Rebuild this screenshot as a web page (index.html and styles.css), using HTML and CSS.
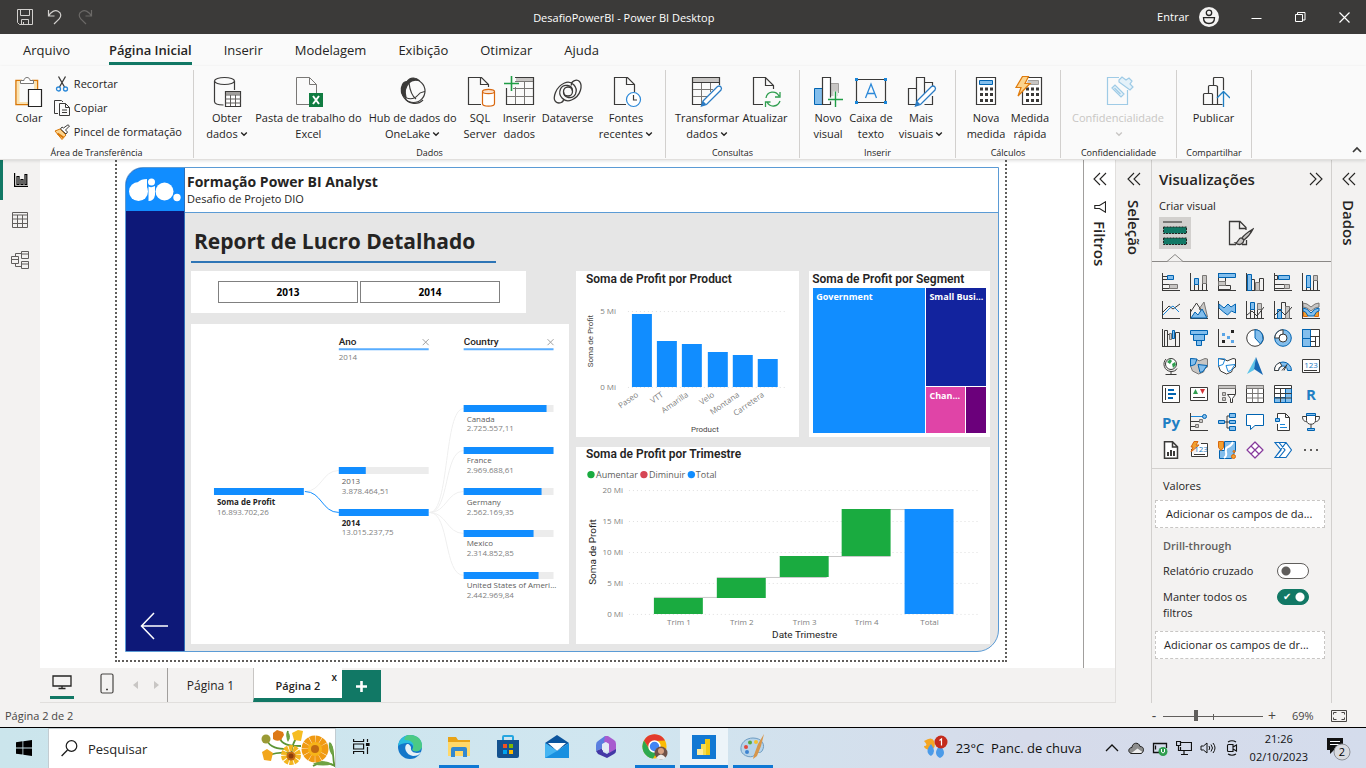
FILE: index.html
```html
<!DOCTYPE html>
<html lang="pt-BR">
<head>
<meta charset="utf-8">
<title>DesafioPowerBI - Power BI Desktop</title>
<link rel="stylesheet" href="styles.css">
</head>
<body>
<svg class="defs" aria-hidden="true">
  <symbol id="caret" viewBox="0 0 8 8"><path d="M1.2 2.5 4 5.3 6.800 2.500" fill="none" stroke="currentColor" stroke-width="1.4"/></symbol>
  <symbol id="left2" viewBox="0 0 14 14"><path d="M7 1 1 7l6 6M13 1 7 7l6 6" fill="none" stroke="currentColor" stroke-width="1.100"/></symbol>
  <symbol id="right2" viewBox="0 0 14 14"><path d="m1 1 6 6-6 6M7 1l6 6-6 6" fill="none" stroke="currentColor" stroke-width="1.1"/></symbol>
</svg>

<header class="titlebar">
  <div class="quick">
    <button aria-label="Salvar"><svg width="16" height="16" viewBox="0 0 16 16" fill="none" stroke="#d2d0ce"><path d="M.5.5h15v15H2.500l-2-2zM3.500.5v6h9v-6M4.500 15.500v-5h7v5M6.500 13v2"/></svg></button>
    <button aria-label="Desfazer"><svg width="16" height="16" viewBox="0 0 16 16" fill="none" stroke="#d2d0ce" stroke-width="1.200"><path d="M1.500 1v6h6M1.500 7C4 2.500 8 .8 11 2.200c4 2 3 5.800 1.200 7.600L7 15"/></svg></button>
    <button aria-label="Refazer"><svg width="16" height="16" viewBox="0 0 16 16" fill="none" stroke="#6b6967" stroke-width="1.200"><path d="M14.500 1v6h-6M14.500 7C12 2.500 8 .8 5 2.200c-4 2-3 5.800-1.200 7.600L9 15"/></svg></button>
  </div>
  <h1>DesafioPowerBI - Power BI Desktop</h1>
  <div class="window">
    <button class="account">Entrar
      <svg width="20" height="20" viewBox="0 0 20 20"><circle cx="10" cy="10" r="10" fill="#f3f2f1"/><circle cx="10" cy="5.800" r="2.700" fill="none" stroke="#252423" stroke-width="1.300"/><path d="M4.500 10.700h11c0 3.600-2 5.800-5.500 5.800s-5.500-2.200-5.500-5.800z" fill="none" stroke="#252423" stroke-width="1.300"/></svg></button>
    <button class="win" aria-label="Minimizar"><svg width="11" height="11" viewBox="0 0 11 11"><path d="M.5 6.500h10" stroke="#fff"/></svg></button>
    <button class="win" aria-label="Restaurar"><svg width="11" height="11" viewBox="0 0 11 11" fill="none" stroke="#fff"><path d="M.5 2.500h7v7h-7zM2.500 2.500v-2h7.500v7.500H8"/></svg></button>
    <button class="win" aria-label="Fechar"><svg width="11" height="11" viewBox="0 0 11 11"><path d="m.5.5 10 10m0-10-10 10" stroke="#fff" stroke-width="1.200"/></svg></button>
  </div>
</header>

<nav class="tabs">
  <button>Arquivo</button><button class="active">Página Inicial</button><button>Inserir</button><button>Modelagem</button><button>Exibição</button><button>Otimizar</button><button>Ajuda</button>
</nav>

<section class="ribbon">
  <div class="group g-clip">
    <div class="tools">
      <button class="tool w32"><svg width="32" height="32" viewBox="0 0 32 32" fill="none"><path d="M9 4.500H3v24h12.500M19 4.500h5.500V13" stroke="#d97706" stroke-width="1.500"/><path d="M3.800 5.200h20v8H15.500v14.500H3.800z" fill="#fbe3b0"/><path d="M6.500 7h14.500v7H15v12H6.500z" fill="#fafafa"/><path d="M7.500 7.500v-3H11c0-4 6-4 6 0h3.500v3z" fill="#fff" stroke="#797775"/><path d="M15.500 13.500h13v17h-13z" fill="#fff" stroke="#252423" stroke-width="1.200"/></svg><span>Colar</span></button>
      <div class="stack">
        <button><svg width="16" height="16" viewBox="0 0 16 16" fill="none"><path d="m4.500.5 6 10.500M11.500.5 5.500 11" stroke="#3b3a39" stroke-width="1.300"/><circle cx="4.500" cy="13" r="2" stroke="#2b88d8" stroke-width="1.300"/><circle cx="11.500" cy="13" r="2" stroke="#2b88d8" stroke-width="1.300"/></svg>Recortar</button>
        <button><svg width="16" height="16" viewBox="0 0 16 16" fill="none" stroke="#3b3a39"><path d="M4 13.500H.5V.5h7l1.500 1.500M5.500 3.500h6l4 4v8h-10zM11.500 3.500v4h4M8 10h5M8 12.500h5"/></svg>Copiar</button>
        <button><svg width="16" height="16" viewBox="0 0 16 16" fill="none"><path d="m1 7 5-2 6 6-4 4.500z" fill="#fbd38d" stroke="#d97706"/><path d="m3.500 9.500 6 4" stroke="#d97706" stroke-width="2"/><path d="m6.500 5 5.500 5 1.500-2-2-2L15.500 2 14 .8 9.500 4 8 3z" fill="#fff" stroke="#3b3a39"/></svg>Pincel de formatação</button>
      </div>
    </div>
    <h2>Área de Transferência</h2>
  </div>

  <div class="group g-data">
    <div class="tools">
      <button class="tool w46"><svg width="32" height="32" viewBox="0 0 32 32" fill="none"><g stroke="#3b3a39" stroke-width="1.200"><ellipse cx="13.500" cy="5" rx="10" ry="3.500"/><path d="M3.500 5v20.500c0 2 3 3.500 9 3.500M23.500 5v9"/><path d="M14.500 15.500h15v15h-15z" fill="#fff"/></g><path d="M15 16h14v2.500H15z" fill="#a19f9d"/><path d="M14.500 19h15M14.500 23h15M14.500 27h15M19.500 19v11M24.500 19v11" stroke="#605e5c"/></svg><span>Obter<br>dados<svg class="car"><use href="#caret"/></svg></span></button>
      <button class="tool w110"><svg width="32" height="32" viewBox="0 0 32 32" fill="none"><path d="M17.500 28.500h-13V1.500h13l7 7V17M17.500 1.500v7h7" stroke="#797775"/><path fill="#107c41" d="M17 17h14v14H17z"/><path d="m21 20 6 8m0-8-6 8" stroke="#fff" stroke-width="2"/></svg><span>Pasta de trabalho do<br>Excel</span></button>
      <button class="tool w92"><svg width="32" height="32" viewBox="0 0 32 32" fill="none" stroke="#3b3a39" stroke-width="1.200"><path d="M10 5.500C13 1 19 1 22 4.500c-4-1-8 0-10 2.500-4 4-4.500 9-3 14.500-5-2-6-8-3.500-13 1-2 2.500-3 4.500-3z" fill="#3b3a39"/><circle cx="16.500" cy="15" r="11.500"/><path d="M12 7c1 8 3 13 7 16M6 19c4 5 11 5 15 0 2-3 5-3 7-3.500M8 22c2 5 12 8 18 2"/></svg><span>Hub de dados do<br>OneLake<svg class="car"><use href="#caret"/></svg></span></button>
      <button class="tool w36"><svg width="32" height="32" viewBox="0 0 32 32" fill="none"><path d="M17 28.500H4.500v-27h13l7 7V11M16.500 1.500v7h8" stroke="#3b3a39" stroke-width="1.200"/><path d="M18.500 15.500v12c0 3.500 12 3.500 12 0v-12" fill="#fff" stroke="#d9680f" stroke-width="1.200"/><ellipse cx="24.500" cy="15.500" rx="6" ry="2.200" fill="#fbe3cf" stroke="#d9680f" stroke-width="1.200"/></svg><span>SQL<br>Server</span></button>
      <button class="tool w36"><svg width="32" height="32" viewBox="0 0 32 32" fill="none"><path d="M13 1.500h17v4H13z" fill="#c8c6c4"/><path d="M3.500 12v16.500h27v-27H12" stroke="#3b3a39" stroke-width="1.200"/><path d="M12 5.500h18M10 12.500h20M4 20.500h26M12.500 11v17M21.500 5v23" stroke="#797775"/><path d="M8.500 0v15M1 7.500h15" stroke="#1f9d45" stroke-width="1.600"/></svg><span>Inserir<br>dados</span></button>
      <button class="tool w54"><svg width="32" height="32" viewBox="0 0 32 32" fill="none" stroke="#3b3a39" stroke-width="1.300"><circle cx="16" cy="15.500" r="4.500"/><path d="M20.500 15c0-6-9-8-12-2-3 7 4 14 11 11 10-4 11-15 8-18.500-3-3-9 0-8 4M11.500 16c0 6 9 8 12 2 3-7-4-14-11-11-9 4-12 15-9 18.500 3 3 8 1 8-2"/></svg><span>Dataverse</span></button>
      <button class="tool w56"><svg width="32" height="32" viewBox="0 0 32 32" fill="none"><path d="M16 28.500H4.500v-27h13l7 7V16M16.500 1.500v7h8" stroke="#3b3a39" stroke-width="1.200"/><circle cx="23.500" cy="23.500" r="7" fill="#fff" stroke="#2b88d8" stroke-width="1.200"/><path d="M23.500 19v5H27" stroke="#3b3a39" stroke-width="1.200"/></svg><span>Fontes<br>recentes<svg class="car"><use href="#caret"/></svg></span></button>
    </div>
    <h2>Dados</h2>
  </div>

  <div class="group g-query">
    <div class="tools">
      <button class="tool w62"><svg width="32" height="32" viewBox="0 0 32 32" fill="none"><path d="M2 2h27v4H2z" fill="#c8c6c4"/><path d="M28.500 9V1.500h-27v27H13M1.500 6.500h27" stroke="#3b3a39" stroke-width="1.200"/><path d="M2 13.500h20M2 20.500h14M10.500 7v21M19.500 7v9" stroke="#797775"/><path d="m12 25 14.500-14.500c2.500-1.500 5 1 3.500 3.500L15.500 28.500 10.500 30z" fill="#fff" stroke="#2b7cc4" stroke-width="1.300"/><path d="m12 25 3.500 3.500-5 1.500z" fill="#2b7cc4"/></svg><span>Transformar<br>dados<svg class="car"><use href="#caret"/></svg></span></button>
      <button class="tool w46"><svg width="32" height="32" viewBox="0 0 32 32" fill="none"><path d="M14 28.500H4.500v-27h12l8 8V13M16.500 1.500v8h8" stroke="#3b3a39" stroke-width="1.200"/><path d="M17 22c1-7 10-8 13-2M31 16v5h-5M31 25c-2 6-10 7-13 1M16.500 31v-5h5" stroke="#2f9e4f" stroke-width="1.300"/></svg><span>Atualizar</span></button>
    </div>
    <h2>Consultas</h2>
  </div>

  <div class="group g-insert">
    <div class="tools">
      <button class="tool w32"><svg width="32" height="32" viewBox="0 0 32 32" fill="none"><path d="M2.500 12.500h8v16h-8z" fill="#83beec" stroke="#0063b1"/><path d="M19 7.500h7.500V17" fill="#c8c6c4" stroke="#a19f9d"/><path d="M19 8h7v12h-7z" fill="#c8c6c4"/><path d="M10.500 28.500v-27h8v27z" fill="#fff" stroke="#3b3a39" stroke-width="1.200"/><path d="M23.500 15.500V31M16 23.500h15" stroke="#fafafa" stroke-width="4"/><path d="M23.500 15.500V31M16 23.500h15" stroke="#1f9d45" stroke-width="1.400"/></svg><span>Novo<br>visual</span></button>
      <button class="tool w46"><svg width="32" height="32" viewBox="0 0 32 32" fill="none"><path d="M1.500 3.500h29v23h-29z" stroke="#3b3a39" stroke-width="1.200"/><path d="M0 2h3v3H0zM29 2h3v3h-3zM0 25h3v3H0zM29 25h3v3h-3z" fill="#1a86d9"/><path d="m10.500 22 5.500-14 5.500 14M12.500 17.500h7" stroke="#2b88d8" stroke-width="1.300"/></svg><span>Caixa de<br>texto</span></button>
      <button class="tool w46"><svg width="32" height="32" viewBox="0 0 32 32" fill="none"><path d="M3.500 12.500h8v16h-8zM19.500 6.500h8V11M27.500 20v8.500h-8M11.500 28.500v-27h8V18" stroke="#3b3a39" stroke-width="1.200"/><path d="m12 25 14.500-14.500c2.500-1.500 5 1 3.500 3.500L15.500 28.500 10.500 30z" fill="#fff" stroke="#2b7cc4" stroke-width="1.300"/><path d="m12 25 3.500 3.500-5 1.500z" fill="#2b7cc4"/></svg><span>Mais<br>visuais<svg class="car"><use href="#caret"/></svg></span></button>
    </div>
    <h2>Inserir</h2>
  </div>

  <div class="group g-calc">
    <div class="tools">
      <button class="tool w36"><svg width="32" height="32" viewBox="0 0 32 32" fill="none"><path d="M6.500 1.500h19v27h-19z" fill="#fff" stroke="#3b3a39" stroke-width="1.200"/><path d="M9.500 4.500h13v4h-13z" fill="#83beec" stroke="#0063b1"/><path d="M10 13h13M10 18.500h13M10 24.500h13" stroke="#3b3a39" stroke-width="3" stroke-dasharray="3 2"/></svg><span>Nova<br>medida</span></button>
      <button class="tool w36"><svg width="32" height="32" viewBox="0 0 32 32" fill="none"><path d="M8.500 1.500h19v27h-19z" fill="#fff" stroke="#3b3a39" stroke-width="1.200"/><path d="M14 4.500h10.500v4H12" fill="#c8c6c4" stroke="#a19f9d"/><path d="M12 13h13M12 18.500h13M12 24.500h13" stroke="#3b3a39" stroke-width="3" stroke-dasharray="3 2"/><path d="M8.500.5h6L11 7.500h5L4 20l3-8.500H2z" fill="#fbd38d" stroke="#e07b0c" stroke-width="1.200"/></svg><span>Medida<br>rápida</span></button>
    </div>
    <h2>Cálculos</h2>
  </div>

  <div class="group g-conf">
    <div class="tools">
      <button class="tool off w92" disabled><svg width="32" height="32" viewBox="0 0 32 32" fill="none" stroke="#9fcbe6" stroke-width="1.200"><path d="M17 1.500H5.500v27h20V14"/><path d="m10 12 3-3 9 9-3 3zM12.500 12l6 6M17 4l3-3 4 3 3-2 3 3-2 3 3 3-3 3-11-8z" fill="#e4f1f9"/></svg><span>Confidencialidade<br><svg class="car"><use href="#caret"/></svg></span></button>
    </div>
    <h2>Confidencialidade</h2>
  </div>

  <div class="group g-share">
    <div class="tools">
      <button class="tool w46"><svg width="32" height="32" viewBox="0 0 32 32" fill="none"><path d="M5.500 18.500q0-1 1-1h7q1 0 1 1v10h-9zM10.500 17v-6.500q0-1 1-1h6q1 0 2 1v18h5M15.500 9V2.500q0-1 1-1h8q1 0 1 1V14M14.500 28.500h5" stroke="#3b3a39" stroke-width="1.200"/><path d="M25.500 31V16M19 22l6.500-6.500L32 22" stroke="#1f7fc4" stroke-width="1.300"/></svg><span>Publicar</span></button>
    </div>
    <h2>Compartilhar</h2>
  </div>
  <button class="collapse" aria-label="Recolher"><svg width="10" height="7" viewBox="0 0 10 7"><path d="M1 6l4-4 4 4" fill="none" stroke="#3b3a39" stroke-width="1.700"/></svg></button>
</section>

<main class="work">
  <aside class="rail">
    <button class="on" aria-label="Relatório"><svg width="14" height="14" viewBox="0 0 14 14" fill="none" stroke="#000" stroke-width="1.200"><path d="M.6 0v13.400H14M3 3.500h2v8H3zM7 6.500h2v5H7zM11 1.500h1.800v10H11z"/></svg></button>
    <button aria-label="Tabela"><svg width="16" height="16" viewBox="0 0 16 16" fill="none" stroke="#605e5c"><path d="M.5.5h15v15H.5zM.5 3h15M.5 7h15M.5 11.500h15M5.500 3v12.500M10.500 3v12.500"/></svg></button>
    <button aria-label="Modelo"><svg width="18" height="18" viewBox="0 0 18 18" fill="none" stroke="#605e5c"><path d="M.5 5.500h7v7h-7zM.5 8.500h7M10.500.5h7v7h-7zM10.500 3h7M10.500 10.500h7v7h-7zM10.500 13h7M4.500 5.500v-3h6M4.500 12.500v3h6"/></svg></button>
  </aside>

  <div class="center">
    <div class="upper">
      <div class="canvas">
        <div class="page">
          <article class="report">
            <div class="side">
              <div class="logo"><svg width="52" height="24" viewBox="0 0 52 24" role="img" aria-label="dio"><g fill="#fff"><circle cx="9.500" cy="13.500" r="9.500"/><path d="M9 4q3-3 9-3v12c0 5-3 8-7 9z"/><circle cx="22.500" cy="4" r="3.500"/><path d="M19.500 8.500q3 1.500 6.500-.5v9q-1 6-6.500 6z"/><circle cx="35.500" cy="13.500" r="9"/><circle cx="48" cy="19.500" r="3.700"/></g></svg></div>
              <button class="back" aria-label="Voltar"><svg width="28" height="28" viewBox="0 0 28 28"><path d="M14 1 1.500 14 14 27M1.500 14H28" fill="none" stroke="#fff" stroke-width="1.500"/></svg></button>
            </div>
            <div class="sheet">
              <header class="head"><h3>Formação Power BI Analyst</h3><p>Desafio de Projeto DIO</p></header>
              <div class="body">
                <h4>Report de Lucro Detalhado</h4>
                <div class="cols">
                  <div class="colA">
                    <div class="slicer"><button>2013</button><button>2014</button></div>
                    <div class="card tree">
                      <svg viewBox="0 0 378 320">
                        <g fill="none" stroke="#efefef"><path d="M114 167.500c17 0 17-21 34-21M239 188.500c20 0 14-104 34-104M239 188.500c20 0 14-62 34-62M239 188.500c17 0 17-21 34-21M239 188.500c17 0 17 21 34 21M239 188.500c20 0 14 63 34 63"/></g>
                        <path d="M114 167.500c17 0 17 21 34 21" fill="none" stroke="#118dff"/>
                        <g fill="#ececec"><path d="M148 143h90v7h-90zM273 81h90v7h-90zM273 164h90v7h-90zM273 206h90v7h-90zM273 248h90v7h-90z"/></g>
                        <g fill="#118dff"><path d="M23 164h90v7H23zM148 143h27v7h-27zM148 185h90v7h-90zM273 81h83v7h-83zM273 123h90v7h-90zM273 164h78v7h-78zM273 206h70v7h-70zM273 248h75v7h-75z"/></g>
                        <g fill="#58adff"><path d="M148 24h90v2h-90zM273 24h90v2h-90z"/></g>
                        <path d="m232 15 6 6m0-6-6 6M357 15l6 6m0-6-6 6" stroke="#a0a0a0"/>
                        <g class="hd"><text x="148" y="21">Ano</text><text x="273" y="21">Country</text></g>
                        <g class="tx"><text x="148" y="36">2014</text><text class="b" x="26" y="181">Soma de Profit</text><text x="26" y="191">16.893.702,26</text>
                        <text class="n" x="151" y="160">2013</text><text x="151" y="170">3.878.464,51</text><text class="b" x="151" y="202">2014</text><text x="151" y="211">13.015.237,75</text>
                        <text class="n" x="276" y="98">Canada</text><text x="276" y="107">2.725.557,11</text><text class="n" x="276" y="139">France</text><text x="276" y="149">2.969.688,61</text><text class="n" x="276" y="181">Germany</text><text x="276" y="191">2.562.169,35</text><text class="n" x="276" y="222">Mexico</text><text x="276" y="232">2.314.852,85</text><text class="n" x="276" y="264">United States of Ameri...</text><text x="276" y="274">2.442.969,84</text></g>
                      </svg>
                    </div>
                  </div>
                  <div class="colB">
                    <div class="card product">
                      <svg viewBox="0 0 224 166">
                        <text class="ct" x="10" y="12">Soma de Profit por Product</text>
                        <path d="M52 40.500h158M52 116.500h158" stroke="#dedede" stroke-dasharray="1 3"/>
                        <path d="M56 43h20v73H56zM81 70h20v46H81zM106 73h20v43h-20zM132 81h20v35h-20zM157 84h20v32h-20zM182 88h20v28h-20z" fill="#118dff"/>
                        <g class="tx e"><text x="40" y="43">5 Mi</text><text x="40" y="119">0 Mi</text>
                        <text transform="translate(63 125) rotate(-35)">Paseo</text><text transform="translate(88 125) rotate(-35)">VTT</text><text transform="translate(113 125) rotate(-35)">Amarilla</text><text transform="translate(139 125) rotate(-35)">Velo</text><text transform="translate(164 125) rotate(-35)">Montana</text><text transform="translate(189 125) rotate(-35)">Carretera</text></g>
                        <g class="ax s"><text x="129" y="161">Product</text><text transform="translate(17 70) rotate(-90)">Soma de Profit</text></g>
                      </svg>
                    </div>
                    <div class="card segment">
                      <h5>Soma de Profit por Segment</h5>
                      <div class="treemap"><div class="gov">Government</div><div class="small">Small Busi...</div><div class="chan">Chan...</div><div class="mid"></div></div>
                    </div>
                    <div class="card quarter">
                      <svg viewBox="0 0 415 197">
                        <text class="ct" x="10" y="11">Soma de Profit por Trimestre</text>
                        <circle cx="15" cy="27.500" r="3.700" fill="#1aab40"/><circle cx="68" cy="27.500" r="3.700" fill="#d64554"/><circle cx="115.500" cy="27.500" r="3.700" fill="#118dff"/>
                        <g class="lg"><text x="20" y="31">Aumentar</text><text x="73" y="31">Diminuir</text><text x="120" y="31">Total</text></g>
                        <path d="M53 43.500h352M53 74.500h352M53 105.500h352M53 136.500h352M53 167.500h352" stroke="#dedede" stroke-dasharray="1 3"/>
                        <path d="M78 150.500h111M141 130.500h110M204 109.500h111M267 62.500h110" stroke="#c8c8c8"/>
                        <path d="M78 151h49v16H78zM141 131h49v20h-49zM204 109h49v21h-49zM266 62h49v47h-49z" fill="#1aab40"/><path d="M329 62h49v105h-49z" fill="#118dff"/>
                        <g class="tx e"><text x="47" y="46">20 Mi</text><text x="47" y="77">15 Mi</text><text x="47" y="108">10 Mi</text><text x="47" y="139">5 Mi</text><text x="47" y="170">0 Mi</text></g>
                        <g class="tx m"><text x="103" y="178">Trim 1</text><text x="166" y="178">Trim 2</text><text x="229" y="178">Trim 3</text><text x="291" y="178">Trim 4</text><text x="354" y="178">Total</text></g>
                        <g class="ax"><text x="229" y="191">Date Trimestre</text><text transform="translate(20 105) rotate(-90)">Soma de Profit</text></g>
                      </svg>
                    </div>
                  </div>
                </div>
              </div>
            </div>
          </article>
        </div>
      </div>
      <aside class="fold filters"><button aria-label="Expandir"><svg width="14" height="14"><use href="#left2"/></svg></button><svg width="12" height="12" viewBox="0 0 12 12"><path d="M11.500.8v10.400L5.500 7.500H.8v-3h4.700z" fill="none" stroke="#252423" stroke-width="1.100"/></svg><h2>Filtros</h2></aside>
    </div>
    <div class="pages">
      <button class="dev on" aria-label="Desktop"><svg width="20" height="15" viewBox="0 0 20 15" fill="none" stroke="#252423" stroke-width="1.300"><path d="M1 1h18v10H1zM10 11v2.500M6.500 13.500h7"/></svg></button>
      <button class="dev" aria-label="Celular"><svg width="14" height="21" viewBox="0 0 14 21"><rect x="1" y="1" width="12" height="19" rx="1.500" fill="none" stroke="#484644" stroke-width="1.200"/><path d="M6 16.500h2" stroke="#484644" stroke-width="1.500"/></svg></button>
      <button class="arr" aria-label="Anterior"><svg width="5" height="8" viewBox="0 0 5 8"><path d="M5 0v8L0 4z" fill="#c8c6c4"/></svg></button>
      <button class="arr" aria-label="Próxima"><svg width="5" height="8" viewBox="0 0 5 8"><path d="M0 0v8l5-4z" fill="#c8c6c4"/></svg></button>
      <button class="pg">Página 1</button>
      <div class="pg sel"><button>Página 2</button><button class="x" aria-label="Excluir página">x</button></div>
      <button class="add" aria-label="Nova página"><svg width="11" height="11" viewBox="0 0 11 11"><path d="M5.500 0v11M0 5.500h11" stroke="#fff" stroke-width="2.600"/></svg></button>
    </div>
  </div>

  <aside class="fold select"><button aria-label="Expandir"><svg width="14" height="14"><use href="#left2"/></svg></button><h2>Seleção</h2></aside>

  <aside class="viz">
    <header><h2>Visualizações</h2><button aria-label="Recolher"><svg width="14" height="14"><use href="#right2"/></svg></button></header>
    <h3>Criar visual</h3>
    <div class="modes">
      <button class="on" aria-label="Criar visual"><svg width="24" height="25" viewBox="0 0 24 25"><path d="M0 1h19" stroke="#252423"/><path d="M.5 6h23v6.500H.5zM.5 17h23v6.500H.5z" fill="#117865" stroke="#252423" stroke-dasharray="2 1"/></svg></button>
      <button aria-label="Formatar"><svg width="26" height="26" viewBox="0 0 26 26" fill="none" stroke="#3b3a39" stroke-width="1.300"><path d="M8 24.500H1.500V1.500H12l6 6V10M11.500 1.500v7H18M14 24.500h4.500V20"/><path d="M25 9c-5 3-9 6-11 9l2 2c4-3 7-7 9-11zM13.500 18c-3-1-3 5-6 5 4 3 8 1 8.500-3z" fill="#c8c6c4"/></svg></button>
    </div>
    <div class="ptr"><svg width="16" height="8" viewBox="0 0 16 8"><path d="M0 7.500 8 .5l8 7" fill="#f3f2f1" stroke="#8a8886"/></svg></div>
    <div class="gallery">
      <button aria-label="Barras empilhadas"><svg class="i"><path class="k" d="M.5 0v18M0 17.500h18M.5 6.500h5v-3h-5M.5 11.500h7v4h-7"/><path class="b" d="M5.500 2.500h6v4h-6z"/><path class="g" d="M7.500 11.500h8v4h-8z"/></svg></button>
      <button aria-label="Colunas empilhadas"><svg class="i"><path class="k" d="M.5 0v18M0 17.500h18M4.500 11.500h4v6h-4zM12.500 10.500h4v7h-4z"/><path class="b" d="M4.500 5.500h4v6h-4z"/><path class="g" d="M12.500 2.500h4v8h-4z"/></svg></button>
      <button aria-label="Barras clusterizadas"><svg class="i"><path class="k" d="M.5 0v18M0 17.500h18M.5 4.500h7v4h-7zM.5 12.500h12v4H.5z"/><path class="b" d="M.5.5h17v4H.5z"/><path class="g" d="M.5 8.500h7v4h-7z"/></svg></button>
      <button aria-label="Colunas clusterizadas"><svg class="i"><path class="k" d="M.5 0v18M0 17.500h18M5.500 6.500h3v11h-3zM13.500 5.500h4v12h-4z"/><path class="b" d="M1.500 1.500h4v16h-4z"/><path class="g" d="M9.500 9.500h4v8h-4z"/></svg></button>
      <button aria-label="Barras 100%"><svg class="i"><path class="k" d="M.5 0v18M0 17.500h18M.5 2.500h3v4h-3M.5 11.500h10v4H.5"/><path class="b" d="M4.500 2.500h11v4h-11z"/><path class="g" d="M10.500 11.500h5v4h-5z"/></svg></button>
      <button aria-label="Colunas 100%"><svg class="i"><path class="k" d="M.5 0v18M0 17.500h18M4.500 13.500h4v4h-4zM11.500 7.500h4v10h-4z"/><path class="b" d="M4.500 2.500h4v12h-4z"/><path class="g" d="M11.500 2.500h4v5h-4z"/></svg></button>

      <button aria-label="Linhas"><svg class="i"><path class="k" d="M.5 0v18M0 17.500h18M1 11l6-6 4 3 7-5"/><path class="l" d="m1 14 7-7 3-2 6 6"/></svg></button>
      <button aria-label="Área"><svg class="i"><path class="g" d="M9 8l5-7 3.500 15z"/><path class="k" d="M.5 8v9.500H18M.5 11l6-9 6 9"/><path class="b" d="m1 17 4-6 3 3 4-6 5 9z"/></svg></button>
      <button aria-label="Área empilhada"><svg class="i"><path class="k" d="M.5 0v18M0 17.500h18"/><path class="b" d="m1 3 5 4 4-4 3 3 4.500-3v9l-4-2-4 4-4-3L1 7z"/></svg></button>
      <button aria-label="Linha e colunas empilhadas"><svg class="i"><path class="k" d="M.5 0v18M0 17.500h18M4.500 8.500h4v9h-4zM11.500 8.500h4v9h-4z"/><path class="b" d="M4.500 1.500h4v7h-4z"/><path class="g" d="M11.500 2.500h4v6h-4z"/><path class="k" d="m1 14 5-4 5 5 7-9"/></svg></button>
      <button aria-label="Linha e colunas"><svg class="i"><path class="k" d="M.5 0v18M0 17.500h18M7.500 1.500h4v16h-4z"/><path class="b" d="M3.500 8.500h4v9h-4z"/><path class="g" d="M11.500 5.500h4v12h-4z"/><path class="k" d="m1 14 5-5 5 5 7-8"/></svg></button>
      <button aria-label="Faixas"><svg class="i"><path class="g" d="M1 2q4 0 8 4 4-4 8-4v4q-4 0-8 4-4-4-8-4z"/><path class="o" d="M1.500 10.500h4v5h-4zM12.500 10.500h4v5h-4z"/><path class="b" d="M1 7q4 0 8 5 4-5 8-5v3q-3 0-5 5H6q-2-5-5-5z"/><path class="k" d="M.5 0v18M0 17.500h18"/></svg></button>

      <button aria-label="Cascata"><svg class="i"><path class="k" d="M.5 0v18M0 17.500h18M2.500 1.500h3v16h-3zM13.500 3.500h4v14h-4zM5.500 5.500h2M9 9.500h2"/><path class="b" d="M10.500 1.500h2v8h-2z"/><path class="g" d="M7.500 4.500h2v6h-2z"/></svg></button>
      <button aria-label="Funil"><svg class="i"><path class="b" d="M.5 1.500h17v4H.5zM3.500 5.500h11v6h-11zM6.500 11.500h5v5h-5z"/></svg></button>
      <button aria-label="Dispersão"><svg class="i"><path class="k" d="M.5 0v18M0 17.500h18"/><path fill="#5aa5e6" d="M4 4h3v3H4zM9 7h3v3H9zM13 11h3v3h-3z"/><path fill="#252423" d="M13 1h3v3h-3zM4 11h3v3H4z"/></svg></button>
      <button aria-label="Pizza"><svg class="i"><circle class="w" cx="9" cy="9" r="8.300"/><path class="b" d="M9 .7A8.300 8.300 0 0 1 14.500 15L9 9z"/></svg></button>
      <button aria-label="Rosca"><svg class="i"><circle class="b" cx="9" cy="9" r="8.300"/><circle class="w" cx="9" cy="9" r="4"/><path class="w" d="M.8 9A8.200 8.200 0 0 1 9 .8V5A4 4 0 0 0 5 9z"/></svg></button>
      <button aria-label="Treemap"><svg class="i"><path class="w" d="M.5.5h17v17H.5z"/><path class="b" d="M.5.5h8v9h-8zM.5 9.500h8v8h-8z"/><path class="k" d="M8.500 7.500h9M13.500 7.500v10M8.500 12.500h5"/></svg></button>

      <button aria-label="Mapa"><svg class="i"><circle class="w" cx="9" cy="7" r="5.500"/><path d="m5 5 3-3 2 2-2 3zM10 7l3-2 1 3-3 3z" fill="#2f9e4f"/><path class="k" d="M4 2C0 6 2 14 9 14.500c3 0 5-1 6-3M9 14.500v2.500M3.500 17.500h11"/></svg></button>
      <button aria-label="Mapa coroplético"><svg class="i"><path class="g" d="M.5 1.500 8 3l1 1 6-2.500 2.500.5v8c-3 1-3 3-4 5l-5 2-6-3-2-5z"/><path class="b" d="M.5 1.500 7 2 5 7.500.5 9zM8 7.500l9 1-4 6-3 1z"/></svg></button>
      <button aria-label="Mapa de formas"><svg class="i"><path class="w" d="M.5 1.500 8 3l1 1 6-2.500 2.500.5v8c-3 1-3 3-4 5l-5 2-6-3-2-5z"/><path class="l" d="M.5 1.500 7 2 5 7.500.5 9zM8 8.500l9-1-4 6-3 1z"/></svg></button>
      <button aria-label="Azure Map"><svg class="i"><path d="M10 0 1 17l7-4z" fill="#5cc4e8"/><path d="m10 0 7 18-9-6z" fill="#1768b3"/></svg></button>
      <button aria-label="Medidor"><svg class="i"><path class="b" d="M.5 13.500a8.500 8.500 0 0 1 17 0h-4a4.500 4.500 0 0 0-9 0z"/><path class="w" d="M.5 13.500A8.500 8.500 0 0 1 6 5.500l2 3.500a4.500 4.500 0 0 0-3.500 4.500z"/><path class="k" d="m8 13.500 5-6-3 6"/></svg></button>
      <button aria-label="Cartão"><svg class="i"><path class="w" d="M.5 2.500h17v13H.5zM2 13.500h13"/><text x="9" y="11" class="num">123</text></svg></button>

      <button aria-label="Cartão de várias linhas"><svg class="i"><path class="w" d="M.5.5h17v17H.5zM3.500 3v12"/><path d="M6 5h6M6 9h8M6 13h5" stroke="#0063b1" stroke-width="2"/></svg></button>
      <button aria-label="KPI"><svg class="i"><path class="w" d="M.5 2.500h17v13H.5z"/><path d="m3 9 2.500-5L8 9z" fill="#2f9e4f"/><path d="m10 4 2.500 5L15 4z" fill="#d13438"/><path class="k" d="M3 12.500h12"/></svg></button>
      <button aria-label="Segmentação de dados"><svg class="i"><path class="k" d="M9 17.500H.5V.5h17V9"/><path class="g" d="M.5.500h17v3H.5zM4.500 7.500h3v3h-3zM4.500 12.500h3v3h-3z"/><path class="w" d="M9.500 9.500h8l-3 4v4h-2v-4z"/></svg></button>
      <button aria-label="Tabela"><svg class="i"><path class="w" d="M.5.5h17v17H.5z"/><path class="g" d="M.5.500h17v3H.5zM.5 8.500h17M.5 13h17M6.500 4v13.500M12 4v13.500"/></svg></button>
      <button aria-label="Matriz"><svg class="i"><path class="w" d="M.5.5h17v17H.5z"/><path class="b" d="M11.500 3.500h6v14h-6zM.5 12.500h11v5H.5z"/><path class="k" d="M.5 3.500h17M.5 8.500h17M.5 13h17M6.500 4v13.500"/></svg></button>
      <button class="txt">R</button>

      <button class="txt">Py</button>
      <button aria-label="Principais influenciadores"><svg class="i"><path class="k" d="M.5 0v18M0 17.500h18M1 8.500h9M1 13.500h5"/><path class="l" d="M1 3.500h12"/><circle class="b" cx="14.500" cy="3.500" r="2"/><path class="g" d="M9.500 6.500h3v3h-3zM5.500 11.500h3v3h-3z"/></svg></button>
      <button aria-label="Árvore hierárquica"><svg class="i"><path class="k" d="M6 9h3V3h3M9 9v6h3M9 9h3"/><path class="b" d="M.5 7.500h6v3h-6zM11.500.5h6v4h-6zM11.500 7.500h6v3h-6zM11.500 13.500h6v4h-6z"/></svg></button>
      <button aria-label="P e R"><svg class="i"><path fill="#fff" stroke="#0063b1" d="M.5 1.500h17v11H9l-4.500 4v-4h-4z"/></svg></button>
      <button aria-label="Narrativa"><svg class="i"><path class="w" d="M3.500 8V.5h8l4 4v13h-12V11M11.500.5v4h4"/><path class="b" d="M1.500 5.500h4v3h-4z"/><path class="l" d="M6 11.500h5M6 14.500h7"/></svg></button>
      <button aria-label="Metas"><svg class="i"><path class="w" d="M4.500 1.500h9v6c0 5-9 5-9 0zM4.500 3.500h-4c0 4 2 5 4 5M13.500 3.500h4c0 4-2 5-4 5M9 11.500v4"/><path class="b" d="M4.500.5h9v2h-9zM5.500 15.500h7v2h-7z"/></svg></button>

      <button aria-label="Relatório paginado"><svg class="i"><path class="w" stroke-width="1.500" d="M2.500.8h8l5 5v11.500h-13zM10.500 1v5h5"/><path stroke="#3b3a39" stroke-width="2" d="M6 15v-4M9 15V9M12 15v-5"/></svg></button>
      <button aria-label="Cartão novo"><svg class="i"><path class="w" d="M4 15.500H1.500V8M11 2.500h6.500v13H3M4 13.500h11"/><path class="o" d="M4 .5h4L6 4h3L1 11l2-5H1z"/><text x="11" y="11" class="num">123</text></svg></button>
      <button aria-label="ArcGIS"><svg class="i"><path class="b" d="M6.500.5h11v9l-4 8h-12v-8h5z"/><path d="M15 1q-2 4-5 5t-2 5-2 6" fill="none" stroke="#fff" stroke-width="2"/><path class="o" d="M.5.5h5v6l-2.500 3-2.500-3z"/><circle class="o" cx="15.500" cy="15.500" r="2"/><circle class="o" cx="16" cy="10.500" r="1"/></svg></button>
      <button aria-label="Power Apps"><svg class="i"><path fill="#fff" stroke="#873a9c" stroke-width="1.200" stroke-linejoin="round" d="m1 9 8-8 8 8-8 8zM5 5l8 8M13 5l-8 8"/></svg></button>
      <button aria-label="Power Automate"><svg class="i"><path fill="#fff" stroke="#0f6cbd" stroke-width="1.200" d="M1 1.500h11L17.500 9 12 16.500H1L7 9zM5 1.500 11 9l-6 7.500M1 16.500 12 1.500"/></svg></button>
      <button aria-label="Mais visuais"><svg class="i"><path fill="#605e5c" d="M2 8h2v2H2zM8 8h2v2H8zM14 8h2v2h-2z"/></svg></button>
    </div>
    <div class="wells">
      <h4>Valores</h4>
      <div class="well in">Adicionar os campos de da...</div>
      <h4 class="dt">Drill-through</h4>
      <label class="tg"><span>Relatório cruzado</span><input type="checkbox" role="switch"></label>
      <label class="tg"><span>Manter todos os filtros</span><input type="checkbox" role="switch" checked></label>
      <div class="well">Adicionar os campos de dr...</div>
    </div>
  </aside>

  <aside class="fold data"><button aria-label="Expandir"><svg width="14" height="14"><use href="#left2"/></svg></button><h2>Dados</h2></aside>
</main>

<footer class="status">
  <span>Página 2 de 2</span>
  <div class="zoom"><button aria-label="Reduzir">-</button><input type="range" min="0" max="100" value="32" aria-label="Zoom"><button aria-label="Ampliar">+</button><output>69%</output>
  <button class="fit" aria-label="Ajustar"><svg width="16" height="12" viewBox="0 0 16 12" fill="none" stroke="#484644"><path d="M.5.5h15v11H.5zM2.500 4.500v-2h3M10.500 2.500h3v2M13.500 7.500v2h-3M5.500 9.500h-3v-2"/></svg></button></div>
</footer>

<div class="taskbar">
  <button class="start" aria-label="Iniciar"><svg width="16" height="16" viewBox="0 0 16 16"><path d="M0 2.200 6.500 1.300v6.200H0zM7.300 1.200 16 0v7.500H7.300zM0 8.400h6.500v6.200L0 13.700zM7.300 8.400H16V16l-8.700-1.200z"/></svg></button>
  <label class="search"><svg width="17" height="17" viewBox="0 0 17 17"><circle cx="10.500" cy="6" r="5.300" fill="none" stroke="#1b1b1b" stroke-width="1.200"/><path d="M6.500 10 .6 16" stroke="#1b1b1b" stroke-width="1.300"/></svg><input type="text" placeholder="Pesquisar" aria-label="Pesquisar">
    <svg class="flowers" width="74" height="37" viewBox="0 0 74 37"><g fill="none" stroke="#5c9434" stroke-width="1.800"><path d="M5 9c4 9 12 10 22 10M18 6c2 9 10 10 22 10M8 25c12-4 20-3 30 2M35 8c-4 8-5 12-4 20M27 1q-2 5 1 8M52 36c8-5 14-4 22 0M69 13c5 9 2 17 5 24"/></g><path d="M52 34q8-6 20 0-10 3-20 0zM68 12q6 4 4 14-5-5-4-14zM27 2q4 4 0 10-3-5 0-10z" fill="#6fa343"/><circle cx="5" cy="9" r="4.500" fill="#9a9a35"/><path d="M12 3 16 0l6 2 1 3-3 5q-5 2-8-1z" fill="#dd7916"/><path d="M31 3 37 0l5 1-2 10-7-1z" fill="#f6bd22"/><path d="m1 22 5-3 6 4-2 8-7-1z" fill="#f2a61c"/>
      <g fill="none" stroke="#f3b61f"><circle cx="30" cy="25" r="7" stroke-width="6" stroke-dasharray="3.600 .8"/><circle cx="54" cy="19" r="9.500" stroke="#f09a12" stroke-width="8" stroke-dasharray="4.600 .4"/></g><circle cx="30" cy="26" r="4.500" fill="#c56a12"/><circle cx="30" cy="26" r="2.500" fill="#8c3d0c"/><circle cx="54" cy="19" r="7" fill="#f7b419"/><circle cx="54" cy="19" r="4" fill="#c06a12"/></svg></label>
  <div class="apps">
    <button aria-label="Visão de tarefas"><svg width="17" height="15" viewBox="0 0 17 15" fill="none" stroke="#111" stroke-width="1.200"><path d="M.6 0v2.500h10V0M.6 5h10v5H.600zM.6 15v-2.500h10V15M14.500 0v3M14.500 8v7"/><path d="M13.500 4.500h2.500v2h-2.500z" fill="#111"/></svg></button>
    <button aria-label="Edge"><svg width="24" height="24" viewBox="0 0 24 24"><circle cx="12" cy="12" r="12" fill="#1377c9"/><path d="M0 11C1 4 6 0 12 0c8 0 12 5 12 11 0 4-4 6-8 5-2-.5-2-1-1-3 1-5-8-7-15-2z" fill="#29bde0"/><path d="M12 0c8 0 12 5 12 11 0 4-4 6-8 5-2-.5-2-1-1-3 2-5-2-8-8-8C5 2 9 0 12 0z" fill="#58cf66" opacity=".75"/><path d="M9 9c-4 3-1 11 6 12 4 0 6-1 8-4-4 2-11 1-10-5-1-1-1-3-4-3z" fill="#e6f1f7"/></svg></button>
    <button class="run" aria-label="Explorador"><svg width="24" height="22" viewBox="0 0 24 22"><path d="M1 1h8l2 3h12v16H1z" fill="#e8a317"/><path d="M1 6h22v14H1z" fill="#ffd869"/><path d="M4 21v-8q0-2 2-2h12q2 0 2 2v8h-4v-6H8v6z" fill="#3288cf"/></svg></button>
    <button aria-label="Store"><svg width="24" height="24" viewBox="0 0 24 24"><path d="M7 6V2q0-1 1-1h8q1 0 1 1v4" fill="none" stroke="#26a6e0" stroke-width="2"/><path d="M1 5h22v16q0 2-2 2H3q-2 0-2-2z" fill="#14528f"/><path d="M7 9h4v4H7z" fill="#f25022"/><path d="M13 9h4v4h-4z" fill="#7fba00"/><path d="M7 15h4v4H7z" fill="#00a4ef"/><path d="M13 15h4v4h-4z" fill="#ffb900"/></svg></button>
    <button aria-label="Email"><svg width="26" height="23" viewBox="0 0 26 23"><path d="m1 8 12-8 12 8-12 8z" fill="#0b549d"/><path d="M4 8h18l-9 8z" fill="#fff"/><path d="M1 8v15h24V8l-12 8z" fill="#1890e0"/><path d="m1 8 12 8-12 7z" fill="#45b5f2"/></svg></button>
    <button aria-label="Microsoft 365"><svg width="24" height="24" viewBox="0 0 24 24"><path d="M11 1 4 6q-2 1-2 4v6l7-3V9l6-5z" fill="#5b7fe0"/><path d="m2 16 7-3v4l4 2 9-7v4q0 2-2 3l-7 4-9-4z" fill="#4338a6"/><path d="M11 1h3l6 4q2 1 2 4v5l-7 4V9l-5-2z" fill="#a85ccf"/><path d="m8 9 4-2 3 2v6l-3 2-4-2z" fill="#e4ecf5"/></svg></button>
    <button class="run" aria-label="Chrome"><svg width="26" height="26" viewBox="0 0 26 26"><circle cx="12.500" cy="12.500" r="12" fill="#fbbc05"/><path d="M2 6.500a12 12 0 0 1 21 0l-10.500.5-5 8z" fill="#e33b2e"/><path d="M2 6.500a12 12 0 0 0 9 18l5-8-8.500-1z" fill="#2da94f"/><circle cx="12.500" cy="12.500" r="5.500" fill="#4285f4" stroke="#fff" stroke-width="1.500"/><circle cx="19" cy="19" r="6.500" fill="#705248"/><circle cx="19" cy="17" r="3" fill="#d7a183"/><path d="M14 24q5-7 10 0-5 3-10 0z" fill="#eee"/></svg></button>
    <button class="run cur" aria-label="Power BI"><svg width="24" height="24" viewBox="0 0 24 24"><path d="M0 0h24v24H0z" fill="#1278d3"/><path d="M13 4h5v16h-5z" fill="#f2c811"/><path d="M9 9h5v11H9z" fill="#f7dc4e"/><path d="M5 14h6v6H5z" fill="#ffeb99"/></svg></button>
    <button class="run" aria-label="Paint"><svg width="26" height="26" viewBox="0 0 26 26"><path d="M13 4c9 0 13 7 9 13-2 3-5 0-7 3-1 5-13 3-14-4C0 9 6 4 13 4z" fill="#b7d4ea" stroke="#6e9cc2"/><circle cx="6" cy="13" r="2" fill="#e2483d"/><circle cx="10" cy="8.500" r="2" fill="#58a742"/><circle cx="7" cy="18" r="2" fill="#3e83d0"/><circle cx="16" cy="8" r="2" fill="#f2c230"/><path d="m24 0-6 10-4 11-1 4 4-3 4-10z" fill="#d7964b"/></svg></button>
  </div>
  <div class="tray">
    <button class="weather"><svg width="26" height="26" viewBox="0 0 26 26"><path d="M2 6q8-5 10 0 3 7-4 9-6-1-6-4 5 0 0-5z" fill="#f5a623"/><path d="M9 9q-7 8 0 12 6-4 0-12zM18 10q-8 9 0 13 8-4 0-13z" fill="#4c9be8"/><circle cx="19" cy="7" r="6.500" fill="#c42b1c"/><path d="m17.500 5.500 2-1.500v6.500" fill="none" stroke="#fff" stroke-width="1.200"/></svg><span>23°C&nbsp; Panc. de chuva</span></button>
    <div class="icons">
      <svg width="16" height="16" viewBox="0 0 16 16"><path d="m2 11 6-6 6 6" fill="none" stroke="#111" stroke-width="1.300"/></svg>
      <svg width="16" height="16" viewBox="0 0 16 16"><path d="M3 13.500c-4-2-2-6 1-6 0-5 7-6 8-1 5 0 4 6 1 7z" fill="#8d8d8d" stroke="#222"/><path d="M3.500 13l6-4.500 5 3.500-2 1z" fill="#eee"/></svg>
      <svg width="16" height="16" viewBox="0 0 16 16"><path d="M8 12.500H1.500v-9h13V8M3.500 5.500v4" fill="none" stroke="#111" stroke-width="1.300"/><circle cx="11" cy="11.500" r="4.500" fill="#2f9e4f"/><path d="M9.500 9v3q1.500 2 3 0V9" fill="none" stroke="#fff"/></svg>
      <svg width="16" height="16" viewBox="0 0 16 16"><path d="M5 2.500h10.500v8H4.500V7M8 10.500v4M5 14.500h7M.500 1.500h4v4h-4zM2.500 5.500v5H4" fill="none" stroke="#111" stroke-width="1.200"/></svg>
      <svg width="16" height="16" viewBox="0 0 16 16"><path d="M1 6h2.500L7 3v10L3.500 10H1zM9 6q1.500 2 0 4M11 4.500q3 3.500 0 7M13 3q4 5 0 10" fill="none" stroke="#111"/></svg>
      <svg width="16" height="16" viewBox="0 0 16 16"><path d="M4.500 4.500H9v7H4.500q-1 0-1-1v-5q0-1 1-1zM9 7l3.500-2v6L9 9M4 2q4-2.500 8 0M4 14q4 2.500 8 0" fill="none" stroke="#111" stroke-width="1.100"/></svg>
    </div>
    <div class="clock"><time>21:26</time><time>02/10/2023</time></div>
    <button class="note" aria-label="Notificações"><svg width="26" height="26" viewBox="0 0 26 26"><path d="M2 3h16v12H9l-4 4v-4H2z" fill="#111"/><path d="M5 6.500h10M5 9.500h10" stroke="#fff"/><circle cx="17" cy="17" r="8" fill="#d9dbe0" stroke="#8c8f96"/><text x="17" y="21" class="badge">2</text></svg></button>
  </div>
</div>
</body>
</html>
```
FILE: styles.css
```css
* { box-sizing: border-box; }
html, body { height: 100%; }
body {
  margin: 0;
  display: flex;
  flex-direction: column;
  background: #fafafa;
  color: #252423;
  font: 11px/16px "Open Sans", "Noto Sans", sans-serif;
}
h1, h2, h3, h4, h5, p { margin: 0; font: inherit; }
button {
  padding: 0;
  border: 0;
  background: none;
  color: inherit;
  font: inherit;
}
svg { display: block; flex: none; }
.defs { width: 0; height: 0; position: absolute; }

/* title bar */
.titlebar {
  height: 34px;
  flex: none;
  display: grid;
  grid-template-columns: 9fr auto 11fr;
  align-items: center;
  background: #3b3a39;
  color: #fff;
}
.titlebar h1 { padding-top: 1px; }
.quick { display: flex; gap: 14px; padding-left: 17px; }
.window { display: flex; justify-content: flex-end; align-items: center; }
.account { display: flex; align-items: center; gap: 10px; margin-right: 15px; }
.win { width: 44px; height: 34px; display: grid; place-items: center; }

/* ribbon */
.tabs {
  flex: none;
  display: flex;
  gap: 32px;
  height: 32px;
  padding: 0 23px;
  font-size: 13px;
}
.tabs button { height: 31px; border-bottom: 3px solid transparent; border-top: 3px solid transparent; white-space: nowrap; }
.tabs .active { font-weight: 600; border-bottom-color: #117865; margin-left: 7px; }
.ribbon {
  flex: none;
  height: 94px;
  display: flex;
  padding-top: 4px;
  border-bottom: 1px solid #e1dfdd;
  box-shadow: 0 1px 3px rgba(0, 0, 0, .12);
  position: relative;
  z-index: 1;
}
.group {
  flex: none;
  height: 88px;
  display: flex;
  flex-direction: column;
  justify-content: space-between;
  border-right: 1px solid #d2d0ce;
}
.group h2 { font-size: 9px; line-height: 10px; text-align: center; white-space: nowrap; }
.tools { display: flex; justify-content: space-between; padding: 6px 11px 0 10px; }
.tool { display: flex; flex-direction: column; align-items: center; gap: 2px; height: 66px; white-space: nowrap; }
.tool span { display: block; text-align: center; }
.tool.off { color: #c8c6c4; }
.car { display: inline-block; width: 8px; height: 8px; margin-left: 2px; }
.w32 { width: 32px; } .w36 { width: 36px; } .w46 { width: 46px; } .w54 { width: 54px; }
.w56 { width: 56px; } .w62 { width: 62px; } .w92 { width: 92px; } .w110 { width: 110px; }
.g-clip { width: 194px; } .g-data { width: 472px; } .g-query { width: 134px; } .g-insert { width: 156px; }
.g-calc { width: 105px; } .g-conf { width: 116px; } .g-share { width: 75px; }
.g-clip .tools { padding-left: 13px; padding-right: 11px; }
.g-insert .tools { padding-left: 12px; }
.g-calc .tools { padding-left: 12px; padding-right: 12px; }
.g-conf .tools, .g-share .tools { justify-content: center; }
.stack { display: flex; flex-direction: column; gap: 8px; }
.stack button { display: flex; align-items: center; gap: 4px; white-space: nowrap; }
.collapse { margin: 76px 4px 0 auto; align-self: flex-start; }

/* work area */
.work { flex: 1; min-height: 0; display: flex; background: #f3f2f1; }
.rail { width: 40px; flex: none; display: flex; flex-direction: column; }
.rail button { height: 40px; display: grid; place-items: center; }
.rail .on { border-left: 3px solid #117865; padding-right: 2px; }
.center { flex: 1; min-width: 0; display: flex; flex-direction: column; }
.upper { flex: 1; min-height: 0; display: flex; background: #fff; }
.canvas { flex: 1; min-width: 0; padding: 0 76px 6px 75px; display: flex; }
.page { flex: 1; display: flex; padding: 7px 6px 8px 8px; border: 2px dotted #605e5c; border-top: 0; }
.report {
  flex: 1;
  min-width: 0;
  display: flex;
  border: 1px solid #5b9bd5;
  border-radius: 18px 0 22px 0;
  overflow: hidden;
  background: #e6e6e6;
}
.side { width: 58px; flex: none; display: flex; flex-direction: column; background: #0d1878; }
.logo { height: 43px; display: grid; place-items: center; background: #118dff; }
.back { margin: auto auto 11px 14px; }
.sheet { flex: 1; min-width: 0; display: flex; flex-direction: column; border-left: 1px solid #2f6fb5; }
.head { height: 45px; padding: 5px 2px; background: #fff; border-bottom: 1px solid #5b9bd5; }
.head h3 { font-size: 14px; line-height: 18px; font-weight: 700; }
.body { flex: 1; min-height: 0; display: flex; flex-direction: column; padding: 12px 8px 7px 6px; }
.body h4 {
  width: 305px;
  padding-left: 3px;
  padding-bottom: 3px;
  margin-bottom: 8px;
  border-bottom: 2px solid #2e75b6;
  font-size: 21px;
  line-height: 33px;
  font-weight: 700;
  white-space: nowrap;
}
.cols { flex: 1; min-height: 0; display: grid; grid-template-columns: 378fr 415fr; gap: 7px; }
.colA { display: flex; flex-direction: column; gap: 11px; min-width: 0; }
.slicer { width: 335px; height: 42px; padding: 10px 26px 10px 27px; display: flex; gap: 2px; background: #fff; }
.slicer button { flex: 1; border: 1px solid #808080; font-size: 10px; font-weight: 700; color: #000; }
.card { background: #fff; min-width: 0; min-height: 0; }
.card > svg { width: 100%; height: 100%; }
.tree { flex: 1; }
.colB { display: grid; grid-template-columns: 224fr 181fr; grid-template-rows: 166fr 197fr; gap: 10px; min-width: 0; }
.quarter { grid-column: 1 / -1; }
.segment { display: flex; flex-direction: column; padding: 0 3px 3px; }
.ct, .segment h5 { font: 600 12px/16px Roboto, sans-serif; fill: #252423; white-space: nowrap; }
.treemap {
  flex: 1;
  display: grid;
  grid-template: "a b b" 98fr "a c d" 46fr / 113fr 39fr 20fr;
  gap: 1px;
  padding: 1px;
  font-size: 9px;
  line-height: 12px;
  font-weight: 700;
  color: #fff;
}
.treemap div { padding: 3px; white-space: nowrap; min-width: 0; overflow: hidden; }
.gov { grid-area: a; background: #118dff; }
.small { grid-area: b; background: #12239e; }
.chan { grid-area: c; background: #e044a7; }
.mid { grid-area: d; background: #6b007b; }
.tx { font-size: 8px; fill: #808080; }
.tx .n { fill: #605e5c; }
.tx .b { font-weight: 700; fill: #252423; }
.hd { font: 500 10px Roboto, sans-serif; fill: #252423; }
.lg { font-size: 9px; fill: #605e5c; }
.ax { font: 10px Roboto, sans-serif; fill: #252423; text-anchor: middle; }
.ax.s { font-size: 8px; fill: #484644; }
.e { text-anchor: end; }
.m { text-anchor: middle; }

/* page tabs */
.pages { flex: none; height: 35px; display: flex; align-items: stretch; border-bottom: 1px solid #e1dfdd; }
.dev { width: 24px; height: 31px; margin-left: 10px; display: grid; place-items: center; }
.dev + .dev { margin-left: 21px; margin-right: 6px; }
.dev.on { border-bottom: 3px solid #117865; }
.arr { width: 21px; display: grid; place-items: center; }
.pg { width: 86px; display: grid; place-items: center; padding-top: 2px; border-left: 1px solid #a19f9d; font-size: 12px; }
.sel { position: relative; width: 89px; background: #fff; border-left-color: #c8c6c4; border-bottom: 4px solid #117865; font-weight: 600; padding-top: 5px; font-size: 11px; }
.x { position: absolute; top: 1px; right: 5px; font-size: 10px; }
.add { width: 39px; height: 32px; margin-top: 2px; display: grid; place-items: center; background: #117865; }

/* folded panes */
.fold { flex: none; width: 35px; display: flex; flex-direction: column; align-items: center; padding-top: 12px; gap: 14px; }
.fold h2 { writing-mode: vertical-rl; font-size: 15px; line-height: 20px; font-weight: 600; }
.filters { width: 32px; background: #fff; border-left: 1px solid #a19f9d; gap: 15px; }
.filters h2 { margin-top: -7px; }
.select { border-left: 1px solid #e1dfdd; width: 36px; }
.data { width: 34px; }

/* visualizations */
.viz { width: 181px; flex: none; border: solid #d2d0ce; border-width: 0 1px; display: flex; flex-direction: column; }
.viz header { display: flex; justify-content: space-between; align-items: center; padding: 9px 8px 0 7px; }
.viz header h2 { font-size: 15px; line-height: 20px; font-weight: 600; }
.viz h3 { padding: 9px 7px 3px; }
.modes { display: flex; gap: 34px; padding-left: 7px; }
.modes button { width: 32px; height: 32px; display: grid; place-items: center; }
.modes .on { background: #d2d0ce; }
.ptr { height: 13px; padding: 5px 15px 0; border-bottom: 1px solid #8a8886; }
.gallery { display: grid; grid-template-columns: repeat(6, 28px); grid-auto-rows: 28px; padding: 6px 0 0 5px; }
.gallery button { display: grid; place-items: center; }
.i { width: 18px; height: 18px; fill: none; }
.i .k { stroke: #3b3a39; }
.i .w { fill: #fff; stroke: #3b3a39; }
.i .b { fill: #83beec; stroke: #0063b1; }
.i .g { fill: #c8c6c4; stroke: #797775; }
.i .o { fill: #f0a030; stroke: #d9680f; }
.i .l { stroke: #1a86d9; }
.num { font-size: 8px; fill: #1a78c2; text-anchor: middle; }
.gallery .txt { font-size: 15px; font-weight: 700; color: #1f7fc4; }
.wells { border-top: 1px solid #d2d0ce; margin-top: 4px; padding: 9px 6px 0 3px; }
.wells h4 { padding: 0 8px; margin-bottom: 6px; }
.well { height: 28px; padding: 5px 8px; background: #fff; border: 1px dashed #c8c6c4; white-space: nowrap; }
.well.in { padding-left: 10px; }
.wells .dt { margin: 10px 0 9px; font-weight: 600; color: #605e5c; }
.tg { display: flex; justify-content: space-between; padding: 0 16px 0 8px; margin-bottom: 10px; }
.tg span { width: 100px; }
.tg input {
  appearance: none;
  width: 32px;
  height: 16px;
  margin: 0;
  border: 1px solid #605e5c;
  border-radius: 8px;
  background: radial-gradient(circle at 8px 7px, #605e5c 4px, #fff 5px);
}
.tg input:checked {
  border-color: #117865;
  background: radial-gradient(circle at 22px 7px, #fff 4px, transparent 5px), #117865;
}
.tg input:checked::before { content: "✔"; display: block; padding-left: 5px; font: 10px/14px "DejaVu Sans", sans-serif; color: #fff; }

/* status bar */
.status { flex: none; height: 25px; display: flex; justify-content: space-between; align-items: center; padding: 1px 19px 0 5px; background: #f3f2f1; border-bottom: 1px solid #000; color: #484644; }
.zoom { display: flex; align-items: center; }
.zoom button { width: 14px; font-size: 14px; }
.zoom input { appearance: none; width: 100px; height: 12px; margin: 0 2px; background: linear-gradient(#605e5c, #605e5c) 0 6px / 100% 1px no-repeat, linear-gradient(#605e5c, #605e5c) 50% 4px / 1px 6px no-repeat; }
.zoom input::-webkit-slider-thumb { appearance: none; width: 4px; height: 11px; background: #605e5c; }
.zoom output { width: 39px; margin-left: 13px; }
.zoom .fit { width: 16px; }

/* taskbar */
.taskbar { flex: none; height: 40px; display: flex; background: linear-gradient(90deg, #cbe5ec, #d0e6f0 45%, #d6dbea 75%, #d4dcec); color: #111; }
.taskbar button { display: grid; place-items: center; }
.start { width: 48px; }
.search { width: 288px; display: flex; align-items: center; padding-left: 12px; background: #fff; border: 1px solid #c3ccd1; border-bottom: 0; }
.search input { flex: 1; min-width: 0; margin-left: 10px; padding: 0; border: 0; background: none; font: 13px "Open Sans", sans-serif; }
.search input::placeholder { color: #252423; opacity: 1; }
.apps { display: flex; gap: 1px; padding-left: 1px; }
.apps button { width: 48px; border-bottom: 3px solid transparent; }
.apps .run { background: linear-gradient(#0f78d4, #0f78d4) 50% 100% / 40px 3px no-repeat border-box; }
.apps .cur { background: linear-gradient(#0f78d4, #0f78d4) 0 100% / 48px 3px no-repeat border-box, #edf4f9; }
.tray { margin-left: auto; display: flex; align-items: center; padding-right: 15px; }
.tray .weather { display: flex; gap: 8px; font-size: 13px; white-space: nowrap; }
.icons { display: flex; gap: 8px; margin: 0 10px 0 22px; }
.clock { display: flex; flex-direction: column; align-items: center; line-height: 18px; }
.note { margin-left: 17px; }
.badge { font-size: 11px; text-anchor: middle; }
```
